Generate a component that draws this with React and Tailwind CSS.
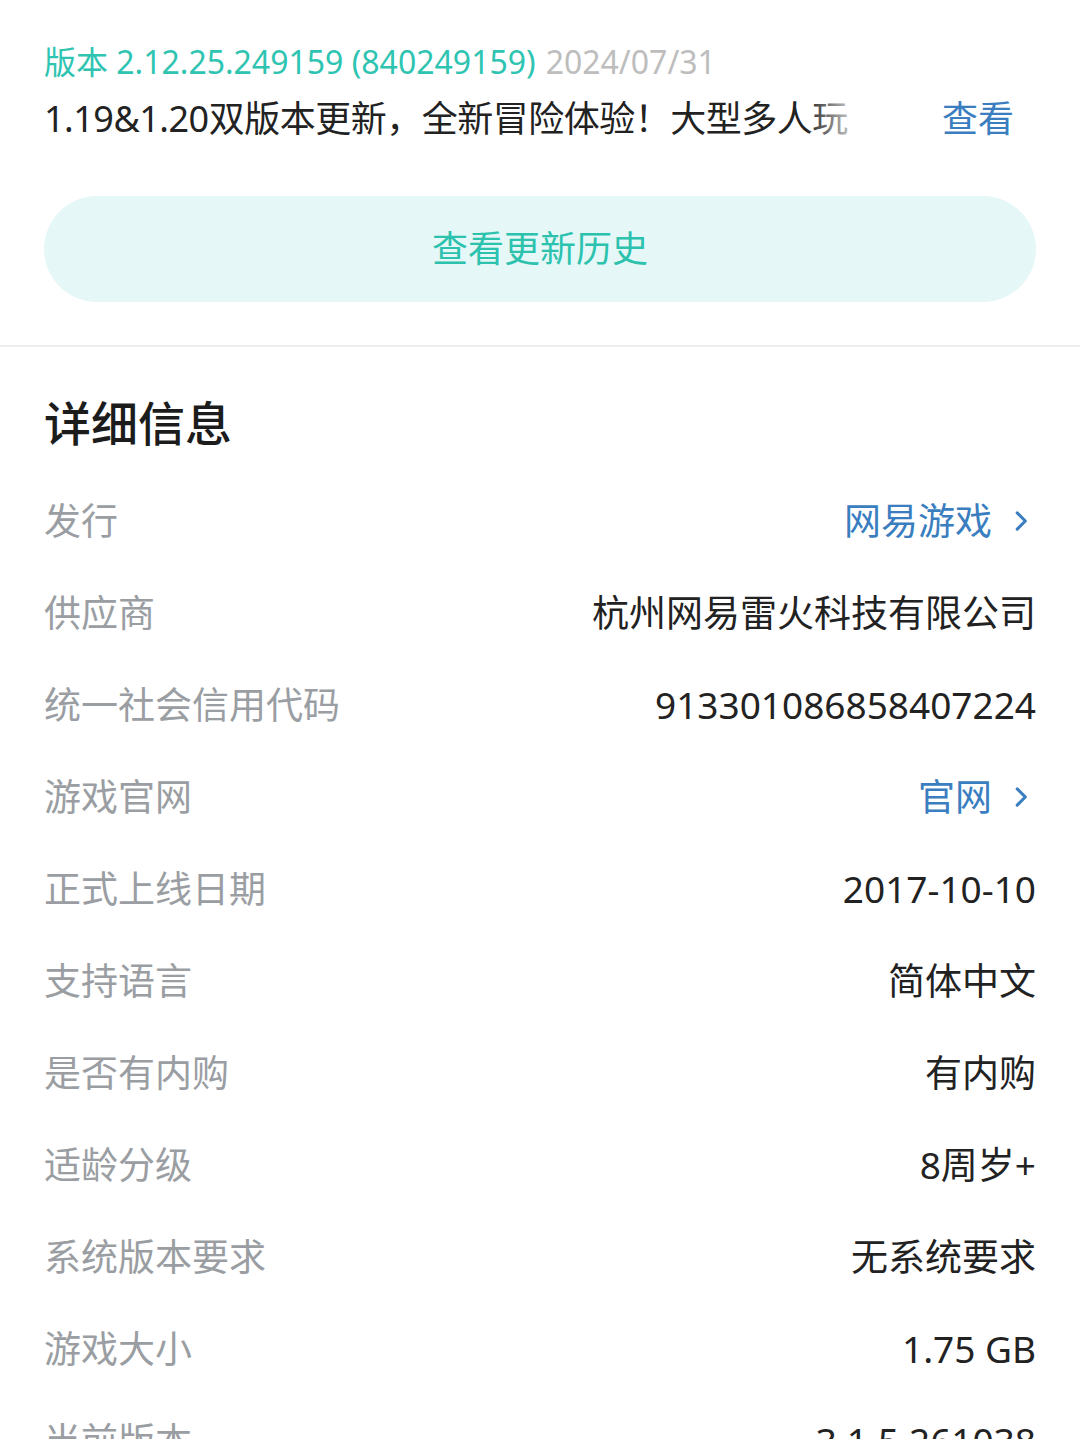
import React from "react";

const rows = [
  { k: "发行", v: "网易游戏", link: true },
  { k: "供应商", v: "杭州网易雷火科技有限公司" },
  { k: "统一社会信用代码", v: "913301086858407224" },
  { k: "游戏官网", v: "官网", link: true },
  { k: "正式上线日期", v: "2017-10-10" },
  { k: "支持语言", v: "简体中文" },
  { k: "是否有内购", v: "有内购" },
  { k: "适龄分级", v: "8周岁+" },
  { k: "系统版本要求", v: "无系统要求" },
  { k: "游戏大小", v: "1.75 GB" },
  { k: "当前版本", v: "3.1.5.261038" },
];

function Chevron() {
  return (
    <svg width="26" height="26" viewBox="0 0 24 24" className="ml-[16px] mr-[2px]">
      <path d="M8.5 4.5 L16 12 L8.5 19.5" fill="none" stroke="#3a7ec0" strokeWidth="2.8" strokeLinecap="round" strokeLinejoin="round" />
    </svg>
  );
}

export default function App() {
  return (
    <div
      className="w-[1080px] h-[1439px] overflow-hidden bg-white"
      style={{ fontFamily: '"Noto Sans", "Noto Sans CJK SC", sans-serif' }}
    >
      <div className="px-[44px] pt-[40px]">
        <div className="h-[44px] flex items-center text-[32px] leading-none">
          <span className="text-[#2ec4b1]">版本 2.12.25.249159 (840249159)</span>
          <span className="text-[#bdbdbd] ml-[10px]">2024/07/31</span>
        </div>
        <div className="h-[70px] flex items-center">
          <div className="relative w-[822px] overflow-hidden whitespace-nowrap text-[36px] leading-none text-[#222] tracking-[-0.5px]">
            1.19&amp;1.20双版本更新，全新冒险体验！大型多人玩
            <div className="absolute right-0 top-0 h-full w-[60px] bg-gradient-to-r from-[rgba(255,255,255,0)] to-white" />
          </div>
          <span className="ml-auto text-[36px] leading-none text-[#3a7ec0] mr-[22px]">查看</span>
        </div>
        <div className="mt-[42px] h-[106px] rounded-full bg-[#e5f8f7] flex items-center justify-center text-[36px] text-[#2cc2ae]">
          查看更新历史
        </div>
      </div>
      <div className="mt-[43px] h-[2px] bg-[#eeeeee]" />
      <div className="px-[44px]">
        <div className="h-[128px] pt-[24px] flex items-center text-[47px] font-medium text-[#1c1c1c]">
          详细信息
        </div>
        {rows.map((r) => (
          <div key={r.k} className="h-[92px] flex items-center justify-between">
            <span className="text-[37px] text-[#9a9ea3]">{r.k}</span>
            {r.link ? (
              <span className="flex items-center text-[37px] text-[#3a7ec0]">
                {r.v}
                <Chevron />
              </span>
            ) : (
              <span className="text-[37px] text-[#222]">{r.v}</span>
            )}
          </div>
        ))}
      </div>
    </div>
  );
}
